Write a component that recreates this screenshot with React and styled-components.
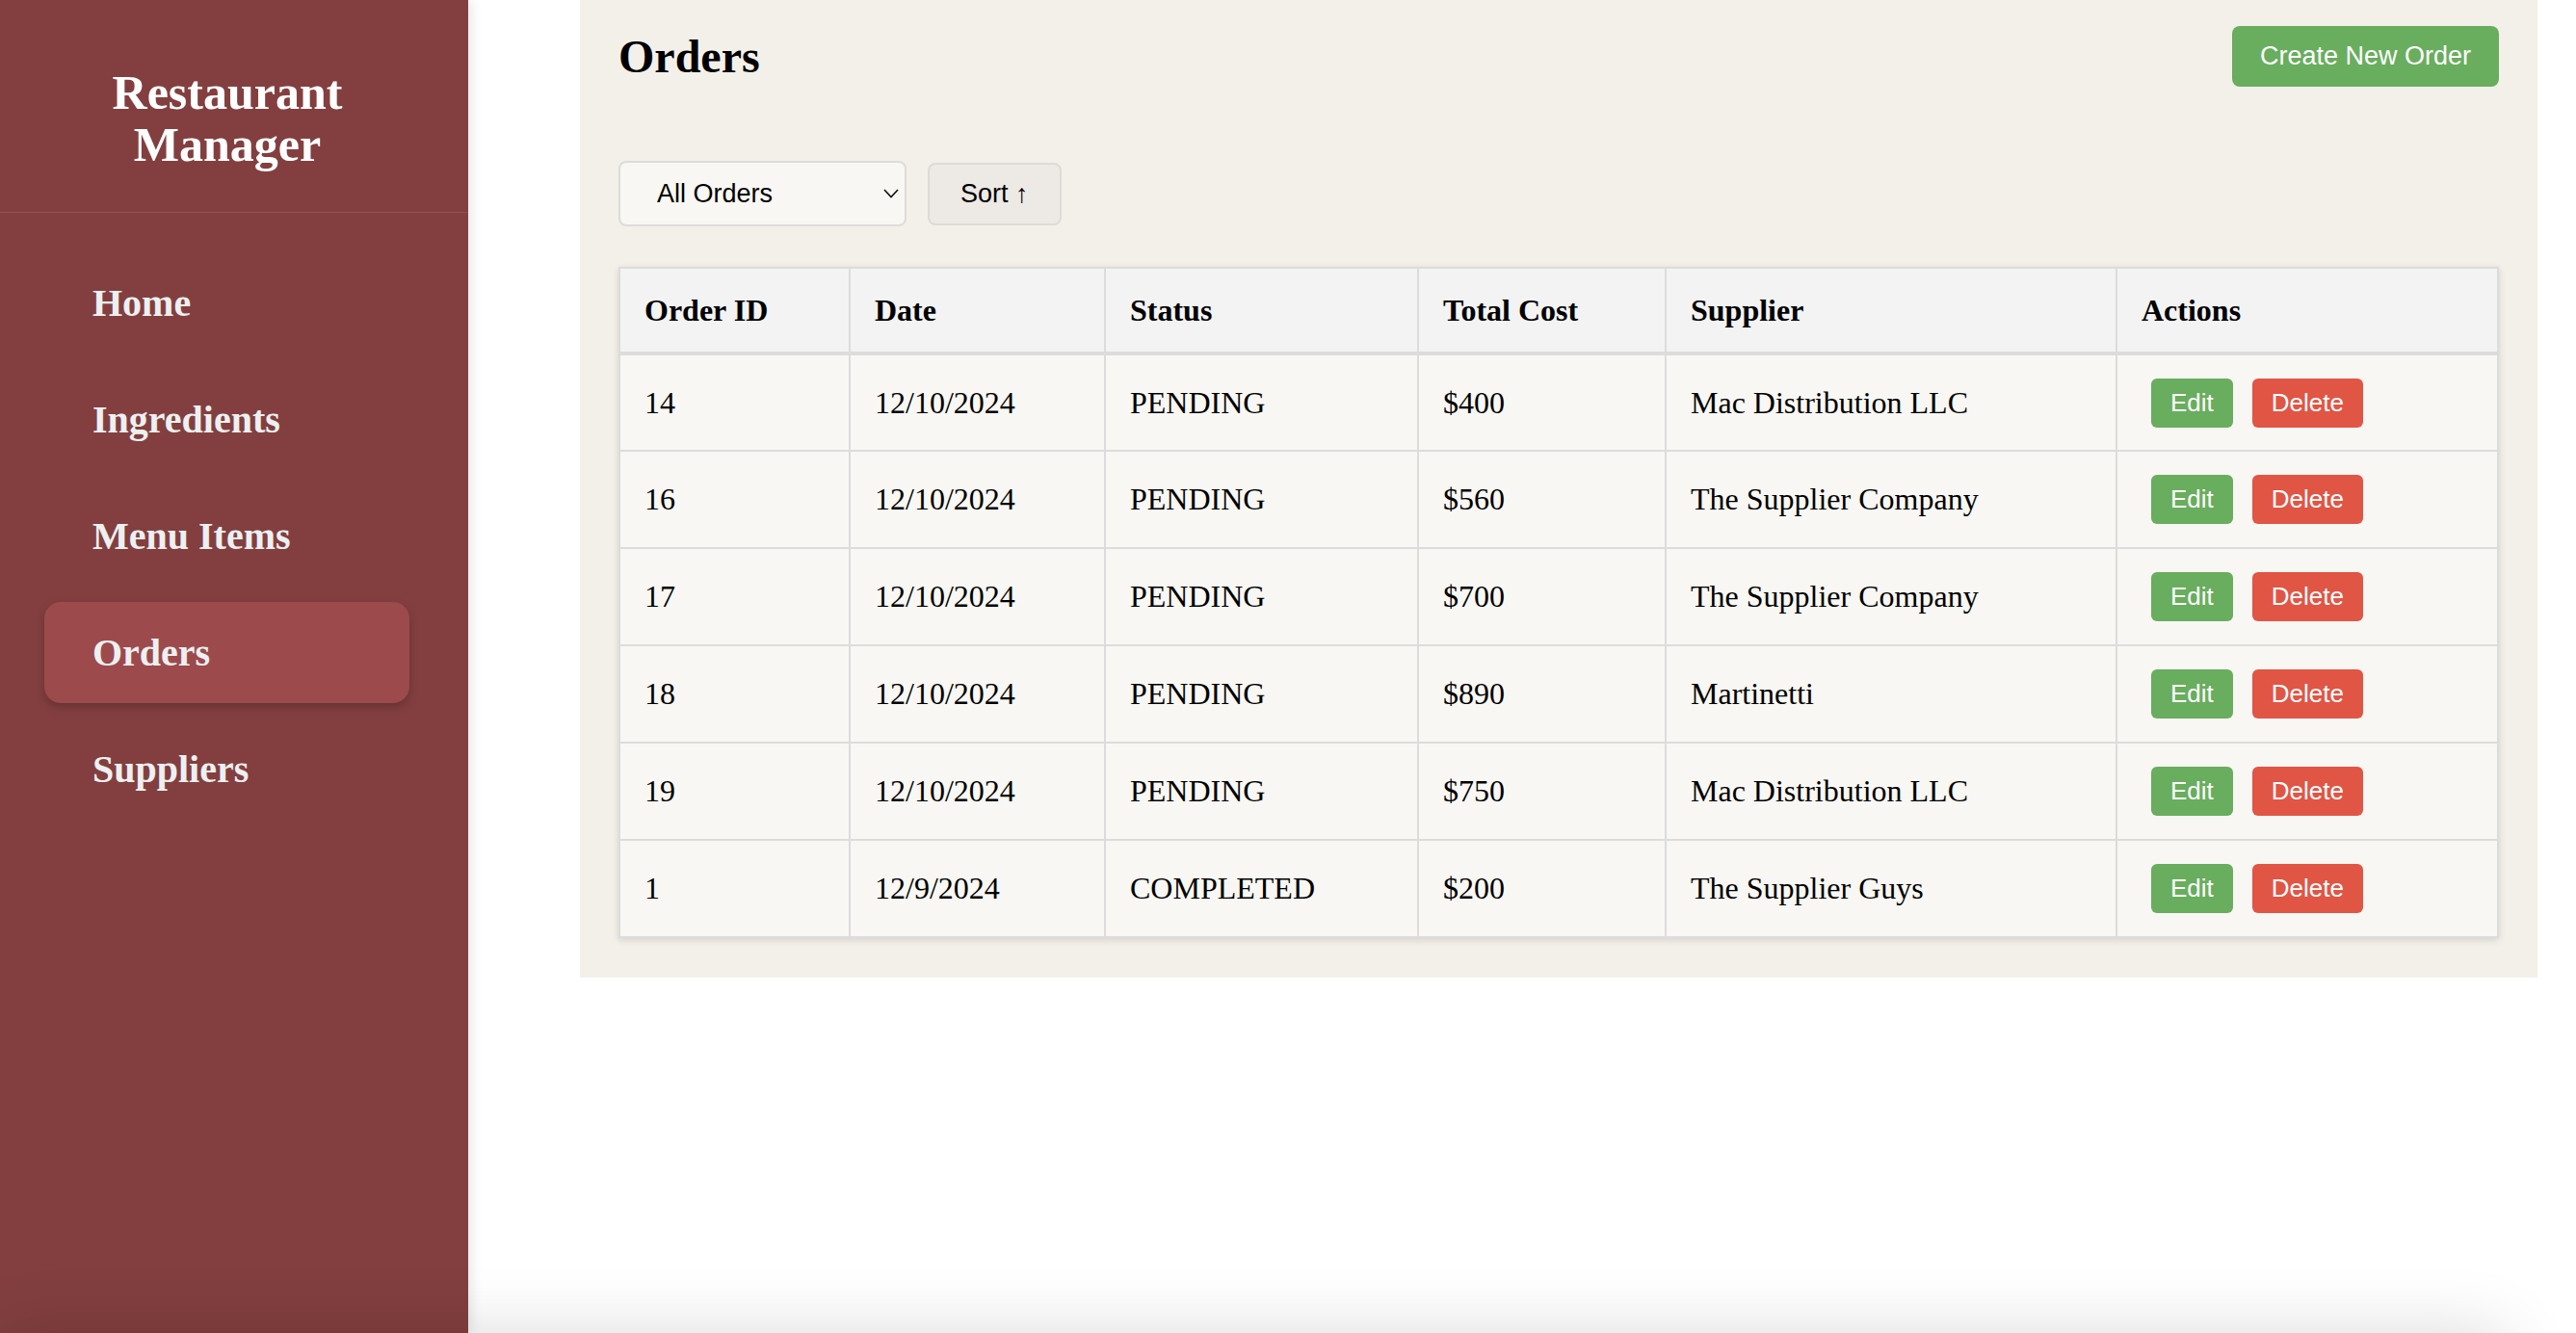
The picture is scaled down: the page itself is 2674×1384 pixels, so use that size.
import React from 'react';
import styled, { createGlobalStyle } from 'styled-components';

const GlobalStyle = createGlobalStyle`
  html, body {
    margin: 0;
    padding: 0;
    background: #ffffff;
  }
  body {
    font-family: "Liberation Serif", "Times New Roman", serif;
    color: #000000;
  }
  *, *::before, *::after {
    box-sizing: border-box;
  }
`;

const Layout = styled.div`
  display: flex;
  min-height: 100vh;
`;

const Sidebar = styled.aside`
  position: relative;
  z-index: 1;
  width: 486px;
  flex-shrink: 0;
  display: flex;
  flex-direction: column;
  background: #833f3f;
  box-shadow: 2px 0 12px rgba(0, 0, 0, 0.12);
`;

const Brand = styled.div`
  padding: 69px 14px 43px 0;
  border-bottom: 1px solid rgba(255, 255, 255, 0.1);
`;

const BrandTitle = styled.h2`
  margin: 0;
  font-size: 50px;
  line-height: 54px;
  font-weight: 700;
  color: #ffffff;
  text-align: center;
`;

const Nav = styled.nav`
  display: flex;
  flex-direction: column;
  gap: 16px;
  padding: 41px 61px 0 46px;
`;

const NavItem = styled.a`
  display: flex;
  align-items: center;
  height: 105px;
  padding-left: 50px;
  border-radius: 17px;
  font-size: 40px;
  font-weight: 700;
  color: #ecf0f1;
  text-decoration: none;
  background: ${(p) => (p.$active ? '#9c4a4c' : 'transparent')};
  box-shadow: ${(p) => (p.$active ? '0 4px 10px rgba(0, 0, 0, 0.22)' : 'none')};
  cursor: pointer;
`;

const Main = styled.main`
  flex: 1;
  padding: 0 40px 0 116px;
`;

const Panel = styled.section`
  background: #f3f0ea;
  padding: 27px 40px 41px;
`;

const PageHeader = styled.div`
  display: flex;
  align-items: center;
  justify-content: space-between;
  margin-bottom: 77px;
`;

const PageTitle = styled.h1`
  margin: 0;
  font-size: 48px;
  line-height: 48px;
  font-weight: 700;
  color: #000000;
`;

const PrimaryButton = styled.button`
  height: 63px;
  padding: 0 29px;
  border: none;
  border-radius: 8px;
  background: #69ad5e;
  color: #ffffff;
  font-family: "Liberation Sans", Arial, sans-serif;
  font-size: 27px;
  cursor: pointer;
`;

const Filters = styled.div`
  display: flex;
  align-items: center;
  gap: 22px;
  margin-bottom: 42px;
`;

const SelectWrap = styled.div`
  position: relative;
  width: 299px;
`;

const Select = styled.select`
  appearance: none;
  -webkit-appearance: none;
  width: 100%;
  height: 68px;
  padding: 0 40px 0 38px;
  border: 2px solid #dedcd9;
  border-radius: 8px;
  background: #f8f7f3;
  color: #000000;
  font-family: "Liberation Sans", Arial, sans-serif;
  font-size: 27px;
`;

const Chevron = styled.svg`
  position: absolute;
  right: 8px;
  top: 50%;
  transform: translateY(-50%);
  pointer-events: none;
`;

const SortButton = styled.button`
  height: 65px;
  padding: 0 32px;
  border: 2px solid #dedbd7;
  border-radius: 8px;
  background: #ede9e4;
  color: #000000;
  font-family: "Liberation Sans", Arial, sans-serif;
  font-size: 27px;
  cursor: pointer;
`;

const Table = styled.table`
  width: 100%;
  table-layout: fixed;
  border-collapse: collapse;
  background: #f8f7f3;
  border: 2px solid #dcdcdc;
  box-shadow: 0 2px 7px rgba(0, 0, 0, 0.13);
`;

const Col = styled.col`
  width: ${(p) => p.$width}px;
`;

const Th = styled.th`
  height: 89px;
  padding: 0 25px;
  text-align: left;
  font-size: 32px;
  font-weight: 700;
  background: #f3f3f3;
  border: 2px solid #dcdcdc;
  border-bottom-width: 4px;
`;

const Td = styled.td`
  height: 101px;
  padding: 0 25px;
  font-size: 32px;
  border: 2px solid #dcdcdc;
  white-space: nowrap;
`;

const ActionButton = styled.button`
  height: 51px;
  margin: 0 10px;
  padding: 0 20px;
  border: none;
  border-radius: 6px;
  background: ${(p) => (p.$variant === 'delete' ? '#e15545' : '#69ad5e')};
  color: #ffffff;
  font-family: "Liberation Sans", Arial, sans-serif;
  font-size: 26px;
  cursor: pointer;
`;

const BottomShade = styled.div`
  position: fixed;
  left: 0;
  top: 100vh;
  width: 2600px;
  height: 200px;
  box-shadow: 0 0 70px rgba(0, 0, 0, 0.15);
  pointer-events: none;
  z-index: 5;
`;

const navItems = ['Home', 'Ingredients', 'Menu Items', 'Orders', 'Suppliers'];

const columns = [
  { label: 'Order ID', width: 239 },
  { label: 'Date', width: 265 },
  { label: 'Status', width: 325 },
  { label: 'Total Cost', width: 257 },
  { label: 'Supplier', width: 468 },
  { label: 'Actions', width: 396 },
];

const orders = [
  { id: 14, date: '12/10/2024', status: 'PENDING', cost: '$400', supplier: 'Mac Distribution LLC' },
  { id: 16, date: '12/10/2024', status: 'PENDING', cost: '$560', supplier: 'The Supplier Company' },
  { id: 17, date: '12/10/2024', status: 'PENDING', cost: '$700', supplier: 'The Supplier Company' },
  { id: 18, date: '12/10/2024', status: 'PENDING', cost: '$890', supplier: 'Martinetti' },
  { id: 19, date: '12/10/2024', status: 'PENDING', cost: '$750', supplier: 'Mac Distribution LLC' },
  { id: 1, date: '12/9/2024', status: 'COMPLETED', cost: '$200', supplier: 'The Supplier Guys' },
];

export default function App() {
  return (
    <>
      <GlobalStyle />
      <Layout>
        <Sidebar>
          <Brand>
            <BrandTitle>
              Restaurant
              <br />
              Manager
            </BrandTitle>
          </Brand>
          <Nav>
            {navItems.map((item) => (
              <NavItem key={item} $active={item === 'Orders'}>
                {item}
              </NavItem>
            ))}
          </Nav>
        </Sidebar>
        <Main>
          <Panel>
            <PageHeader>
              <PageTitle>Orders</PageTitle>
              <PrimaryButton>Create New Order</PrimaryButton>
            </PageHeader>
            <Filters>
              <SelectWrap>
                <Select defaultValue="all">
                  <option value="all">All Orders</option>
                  <option value="pending">Pending</option>
                  <option value="completed">Completed</option>
                </Select>
                <Chevron width="16" height="10" viewBox="0 0 16 10">
                  <polyline points="1,1 8,8.5 15,1" fill="none" stroke="#111" strokeWidth="1.6" />
                </Chevron>
              </SelectWrap>
              <SortButton>Sort ↑</SortButton>
            </Filters>
            <Table>
              <colgroup>
                {columns.map((c) => (
                  <Col key={c.label} $width={c.width} />
                ))}
              </colgroup>
              <thead>
                <tr>
                  {columns.map((c) => (
                    <Th key={c.label}>{c.label}</Th>
                  ))}
                </tr>
              </thead>
              <tbody>
                {orders.map((o) => (
                  <tr key={o.id}>
                    <Td>{o.id}</Td>
                    <Td>{o.date}</Td>
                    <Td>{o.status}</Td>
                    <Td>{o.cost}</Td>
                    <Td>{o.supplier}</Td>
                    <Td>
                      <ActionButton>Edit</ActionButton>
                      <ActionButton $variant="delete">Delete</ActionButton>
                    </Td>
                  </tr>
                ))}
              </tbody>
            </Table>
          </Panel>
        </Main>
      </Layout>
      <BottomShade />
    </>
  );
}
